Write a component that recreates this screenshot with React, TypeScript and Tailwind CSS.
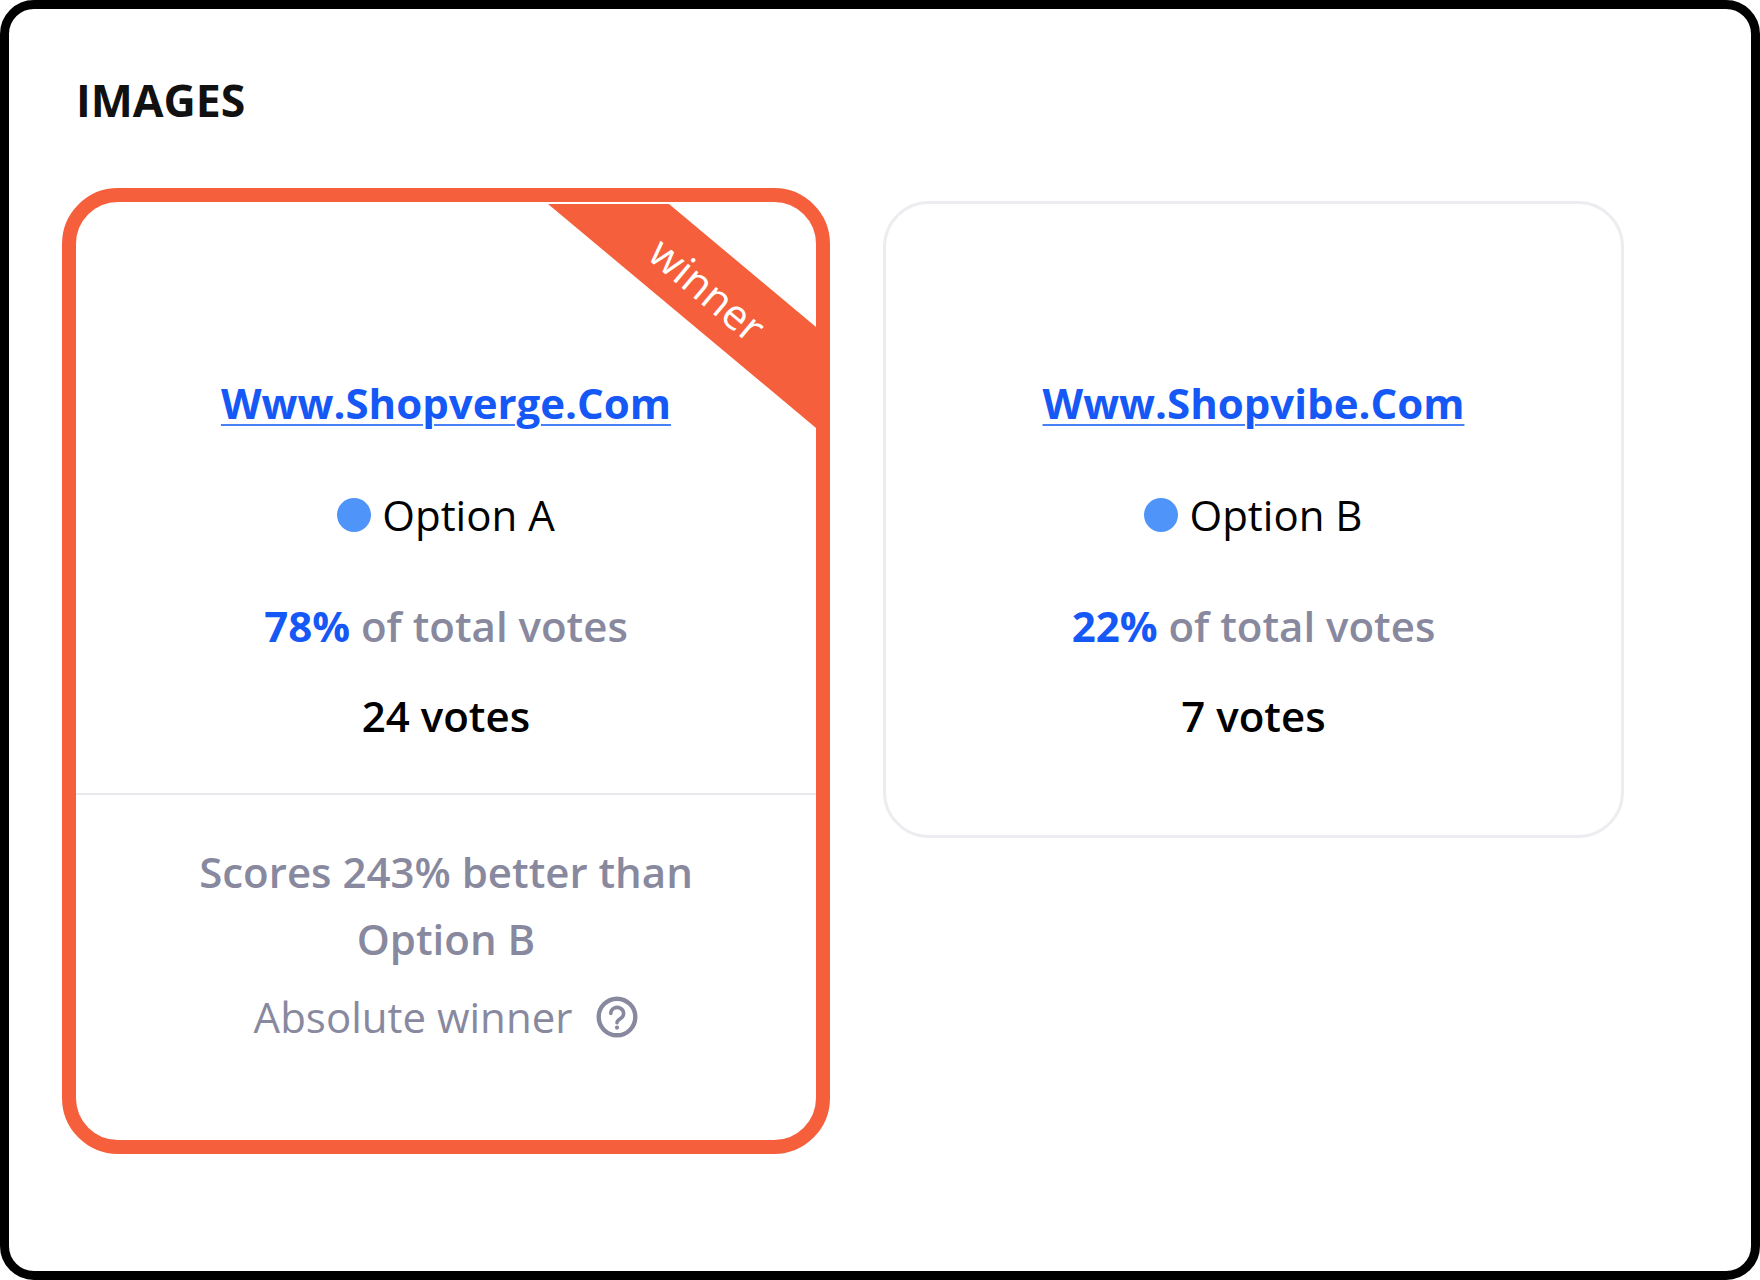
import React from "react";

const font = "font-['Open_Sans',sans-serif]";

function Stats({ name, pct, votes, url, top }: { name: string; pct: string; votes: string; url: string; top: string }) {
  return (
    <div className="flex flex-col items-center">
      <a className={`${top} h-[60px] leading-[60px] text-[42px] font-bold text-[#1558f5] underline decoration-[2px] underline-offset-[5px] decoration-[#4a80f6]`}>{url}</a>
      <div className="mt-[52px] h-[60px] flex items-center gap-[11px] text-[42px] leading-[60px] text-black">
        <span className="w-[34px] h-[34px] rounded-full bg-[#4f94f9]" />
        <span>{name}</span>
      </div>
      <div className="mt-[51px] h-[60px] leading-[60px] text-[42px] font-semibold text-[#88899e]">
        <span className="font-bold text-[#1558f5]">{pct}</span> of total votes
      </div>
      <div className="mt-[30px] h-[60px] leading-[60px] text-[42px] font-semibold text-black">{votes}</div>
    </div>
  );
}

export default function App() {
  return (
    <div className={`${font} w-[1760px] h-[1280px] bg-white`}>
      <div className="w-full h-full border-[9px] border-black rounded-[34px] pl-[67px] pr-[119px]">
        <h1 className="pt-[63px] h-[193px] text-[44.6px] leading-[56px] font-bold text-[#111111]">IMAGES</h1>
        <div className="flex gap-[67px] items-start">
          <div className="relative w-[740px] h-[938px] bg-white rounded-[42px] outline-[14.5px] outline-[#f55f3b]">
            <div className="absolute left-[472px] top-[2px] w-[268px] h-[224px] bg-[#f55f3b] [clip-path:polygon(0_0,121px_0,268px_123px,268px_224px)]" />
            <span className="absolute left-[552px] top-[65px] w-[160px] text-center text-[42px] leading-[44px] font-normal text-white rotate-[40deg]">winner</span>
            <Stats top="mt-[171px]" url="Www.Shopverge.Com" name="Option A" pct="78%" votes="24 votes" />
            <div className="mt-[47px] border-t-2 border-[#e8e9ed] pt-[43px] flex flex-col items-center text-center text-[42px] leading-[67px] font-semibold text-[#88899e]">
              <p>Scores 243% better than<br />Option B</p>
              <div className="mt-[11px] flex items-center gap-[24px] font-normal text-[#88899e]">
                <span>Absolute winner</span>
                <svg width="42" height="42" viewBox="0 0 42 42" fill="none" stroke="#88899e" strokeWidth="4.4" strokeLinecap="round" strokeLinejoin="round">
                  <circle cx="21" cy="21" r="18.3" />
                  <path d="M14.8 17.4a6.4 6 0 1 1 10.2 4.8c-2 1.5-4 2.4-4 4.6" strokeWidth="3.6" />
                  <circle cx="21" cy="31.6" r="1.1" strokeWidth="2" fill="#88899e" />
                </svg>
              </div>
            </div>
          </div>
          <div className="-mt-px w-[741px] h-[637px] rounded-[46px] border-[3px] border-[#ecedf0] bg-white">
            <Stats top="mt-[169px]" url="Www.Shopvibe.Com" name="Option B" pct="22%" votes="7 votes" />
          </div>
        </div>
      </div>
    </div>
  );
}
